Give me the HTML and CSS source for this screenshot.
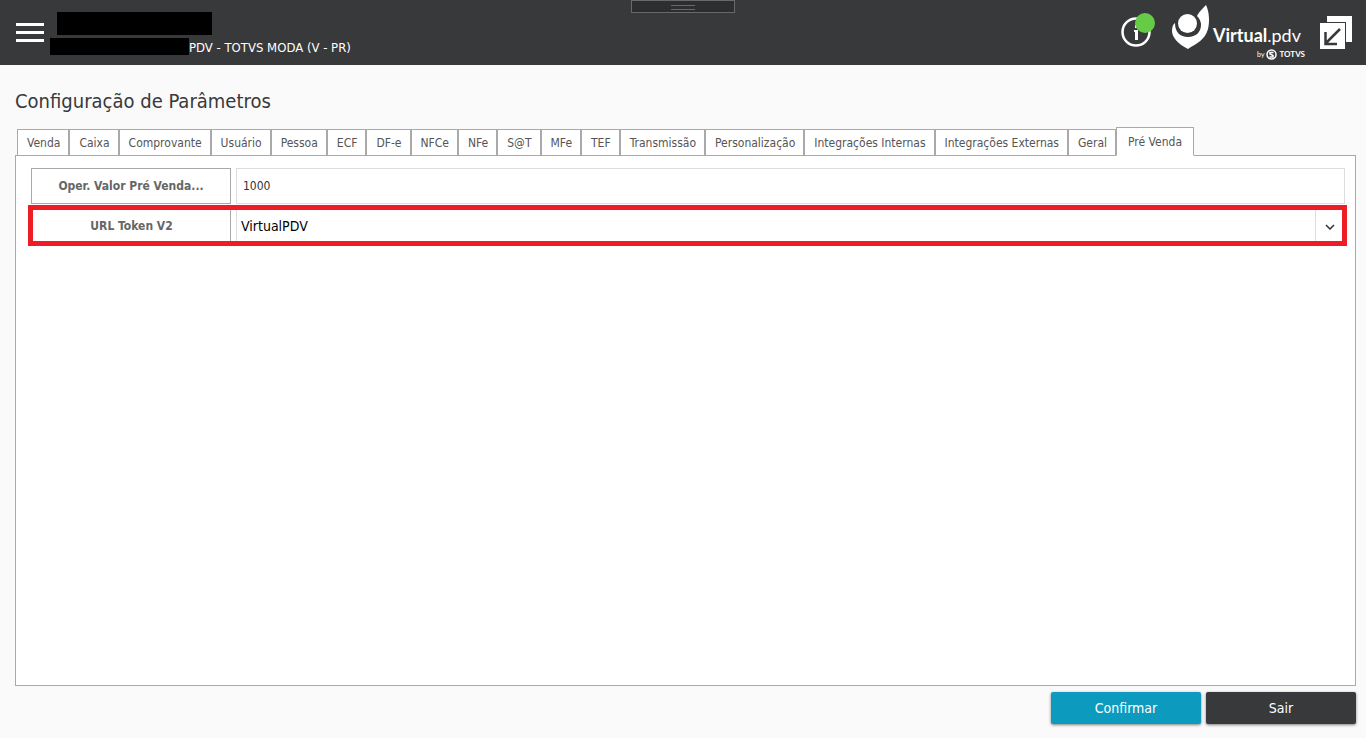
FILE: index.html
```html
<!DOCTYPE html>
<html lang="pt-BR">
<head>
    <meta charset="UTF-8">
    <meta name="viewport" content="width=device-width, initial-scale=1.0">
    <title>Virtual.pdv</title>
    <link rel="stylesheet" href="styles.css">
</head>
<body>
<header class="header">
    <button type="button" class="icon-button menu" aria-label="Menu">
        <svg width="28" height="20" viewBox="0 0 28 20" fill="#fff"><path d="M0 0h28v3H0zM0 8h28v3H0zM0 16h28v3H0z"/></svg>
    </button>
    <div class="company">
        <div class="mask mask-name"></div>
        <div class="branch"><span class="mask mask-branch"></span><span class="branch-name">PDV - TOTVS MODA (V - PR)</span></div>
    </div>
    <div class="handle"></div>
    <button type="button" class="icon-button info" aria-label="Informações">
        <svg width="36" height="36" viewBox="0 0 36 36">
            <circle cx="16" cy="20" r="13.5" fill="none" stroke="#fff" stroke-width="2.5"/>
            <path d="M14 18h4v10h-3v-8h-1zM15 13h3v3h-3z" fill="#fff"/>
            <circle cx="25" cy="11" r="10" fill="#66cc47"/>
        </svg>
    </button>
    <div class="logo">
        <svg class="logo-mark" width="38" height="46" viewBox="0 0 38 46" fill="#fff">
            <path d="M34 0C37 6 38 16 36 24C33 35 25 38 16 44C6 39 0 32 0 26Q0 20 3 18C3 27 8 32 16 32C24 32 29 27 29 20Q29 15 25 11Q26 8 34 0Z"/>
            <circle cx="15.500" cy="18.500" r="9.500"/>
        </svg>
        <div class="logo-text">
            <div class="logo-name"><b>Virtual</b>.pdv</div>
            <div class="logo-by">
                <span>by</span>
                <svg width="11" height="11" viewBox="0 0 22 22" fill="none" stroke="#fff"><circle cx="11" cy="11" r="9" stroke-width="3"/><path d="M15 7H8v3l6 3v3H7" stroke-width="3"/></svg>
                <b>TOTVS</b>
            </div>
        </div>
    </div>
    <button type="button" class="icon-button restore" aria-label="Restaurar janela">
        <svg width="32" height="33" viewBox="0 0 32 33">
            <path d="M7 0h25v26h-6V6H7z" fill="#fff"/>
            <path d="M0 7h25v26H0z" fill="#fff"/>
            <path d="M20 13L6 27M5.500 16v12H17" fill="none" stroke="#38393b" stroke-width="2.500"/>
        </svg>
    </button>
</header>

<main class="content">
    <h1 class="title">Configuração de Parâmetros</h1>
    <div class="tabs" role="tablist">
        <button type="button" role="tab" class="tab">Venda</button>
        <button type="button" role="tab" class="tab">Caixa</button>
        <button type="button" role="tab" class="tab">Comprovante</button>
        <button type="button" role="tab" class="tab">Usuário</button>
        <button type="button" role="tab" class="tab">Pessoa</button>
        <button type="button" role="tab" class="tab">ECF</button>
        <button type="button" role="tab" class="tab">DF-e</button>
        <button type="button" role="tab" class="tab">NFCe</button>
        <button type="button" role="tab" class="tab">NFe</button>
        <button type="button" role="tab" class="tab">S@T</button>
        <button type="button" role="tab" class="tab">MFe</button>
        <button type="button" role="tab" class="tab">TEF</button>
        <button type="button" role="tab" class="tab">Transmissão</button>
        <button type="button" role="tab" class="tab">Personalização</button>
        <button type="button" role="tab" class="tab">Integrações Internas</button>
        <button type="button" role="tab" class="tab">Integrações Externas</button>
        <button type="button" role="tab" class="tab">Geral</button>
        <button type="button" role="tab" class="tab active" aria-selected="true">Pré Venda</button>
    </div>
    <form class="panel" id="parametros">
        <div class="row">
            <label for="operValor">Oper. Valor Pré Venda...</label>
            <input type="text" id="operValor" value="1000">
        </div>
        <div class="row highlight">
            <label for="urlToken">URL Token V2</label>
            <div class="select">
                <select id="urlToken">
                    <option>VirtualPDV</option>
                </select>
                <svg class="chevron" width="10" height="6" viewBox="0 0 10 6" fill="none" stroke="#333" stroke-width="1.500"><path d="M1 1l4 4 4-4"/></svg>
            </div>
        </div>
    </form>
    <div class="actions">
        <button type="submit" form="parametros" class="button confirm">Confirmar</button>
        <button type="button" class="button">Sair</button>
    </div>
</main>
</body>
</html>
```
FILE: styles.css
```css
* {
    box-sizing: border-box;
}
body {
    display: flex;
    flex-direction: column;
    min-height: 100vh;
    margin: 0;
    background-color: #fafafa;
    font-family: "DejaVu Sans Condensed", "Noto Sans", sans-serif;
    color: #38393b;
}
button, input, select {
    font-family: inherit;
}
.header {
    position: relative;
    display: flex;
    align-items: flex-start;
    height: 65px;
    padding: 0 14px 0 16px;
    background-color: #38393b;
    color: white;
}
.icon-button {
    display: flex;
    padding: 0;
    border: none;
    background: none;
    cursor: pointer;
}
.menu {
    margin-top: 23px;
}
.company {
    flex: 1;
    padding: 12px 0 0 6px;
}
.mask {
    background-color: black;
}
.mask-name {
    width: 155px;
    height: 23px;
    margin-left: 7px;
}
.mask-branch {
    width: 139px;
    height: 17px;
}
.branch {
    display: flex;
    margin-top: 3px;
}
.branch-name {
    padding-top: 2px;
    font-size: 13px;
    line-height: 16px;
}
.handle {
    position: absolute;
    top: 0;
    left: 50%;
    width: 104px;
    height: 13px;
    transform: translateX(-52px);
    border: 1px solid #68696a;
    background-color: #2d2e30;
}
.handle::after {
    content: '';
    display: block;
    width: 24px;
    height: 3px;
    margin: 4px auto;
    border: 1px solid #68696a;
    border-width: 1px 0;
}
.info {
    margin: 12px 16px 0 0;
}
.logo {
    display: flex;
    align-items: flex-start;
    width: 148px;
    padding-top: 5px;
}
.logo-text {
    padding: 17px 0 0 3px;
}
.logo-name {
    font-family: Lato, sans-serif;
    font-size: 18px;
    line-height: 27px;
}
.logo-by {
    display: flex;
    align-items: center;
    justify-content: flex-end;
    gap: 2px;
    height: 11px;
    margin-right: -4px;
    font-family: Lato, sans-serif;
    font-size: 8px;
    line-height: 11px;
}
.logo-by span {
    font-size: 7px;
}
.restore {
    margin-top: 16px;
}
.content {
    flex: 1;
    display: flex;
    flex-direction: column;
    padding: 20px 10px 14px 15px;
}
.title {
    margin: 0;
    font-size: 20px;
    font-weight: normal;
    line-height: 32px;
}
.tabs {
    position: relative;
    z-index: 1;
    display: flex;
    align-items: flex-end;
    height: 39px;
    padding-left: 2px;
}
.tab {
    height: 27px;
    padding: 0 8px 0 9px;
    border: 1px solid #a9a9a9;
    background-color: white;
    color: #555;
    font-size: 12px;
    line-height: 24px;
    white-space: nowrap;
    cursor: pointer;
}
.tab.active {
    height: 29px;
    padding: 0 11px;
    border-bottom-color: white;
}
.panel {
    flex: 1;
    margin-top: -1px;
    padding: 12px 10px 12px 15px;
    border: 1px solid #a9a9a9;
    background-color: white;
}
.row {
    display: grid;
    grid-template-columns: 200px 1fr;
    gap: 5px;
    height: 36px;
}
.row label {
    display: flex;
    align-items: center;
    justify-content: center;
    border: 1px solid #a9a9a9;
    color: #666;
    font-size: 12px;
    font-weight: bold;
}
.row input {
    width: 100%;
    padding: 0 6px;
    border: 1px solid #ddd;
    color: #333;
    font-size: 12px;
}
.highlight {
    height: 41px;
    margin: 1px -2px 0 -3px;
    border: 5px solid #ee1c25;
    grid-template-columns: 198px 1fr;
}
.highlight label {
    border-width: 0 1px 0 0;
}
.select {
    position: relative;
    border-left: 1px solid #ddd;
}
.select select {
    width: 100%;
    height: 100%;
    padding: 0 4px;
    border: none;
    appearance: none;
    background-color: white;
    color: black;
    font-size: 14px;
}
.select::after {
    content: '';
    position: absolute;
    top: 0;
    right: 26px;
    height: 100%;
    border-left: 1px solid #ddd;
}
.chevron {
    position: absolute;
    top: 14px;
    right: 7px;
    pointer-events: none;
}
.actions {
    display: flex;
    justify-content: flex-end;
    gap: 5px;
    padding-top: 6px;
}
.button {
    width: 150px;
    height: 32px;
    border: none;
    border-radius: 2px;
    background-color: #38393b;
    box-shadow: 0 1px 3px rgba(0, 0, 0, 0.5);
    color: white;
    font-size: 14px;
    cursor: pointer;
}
.confirm {
    background-color: #0c9abe;
}
```
